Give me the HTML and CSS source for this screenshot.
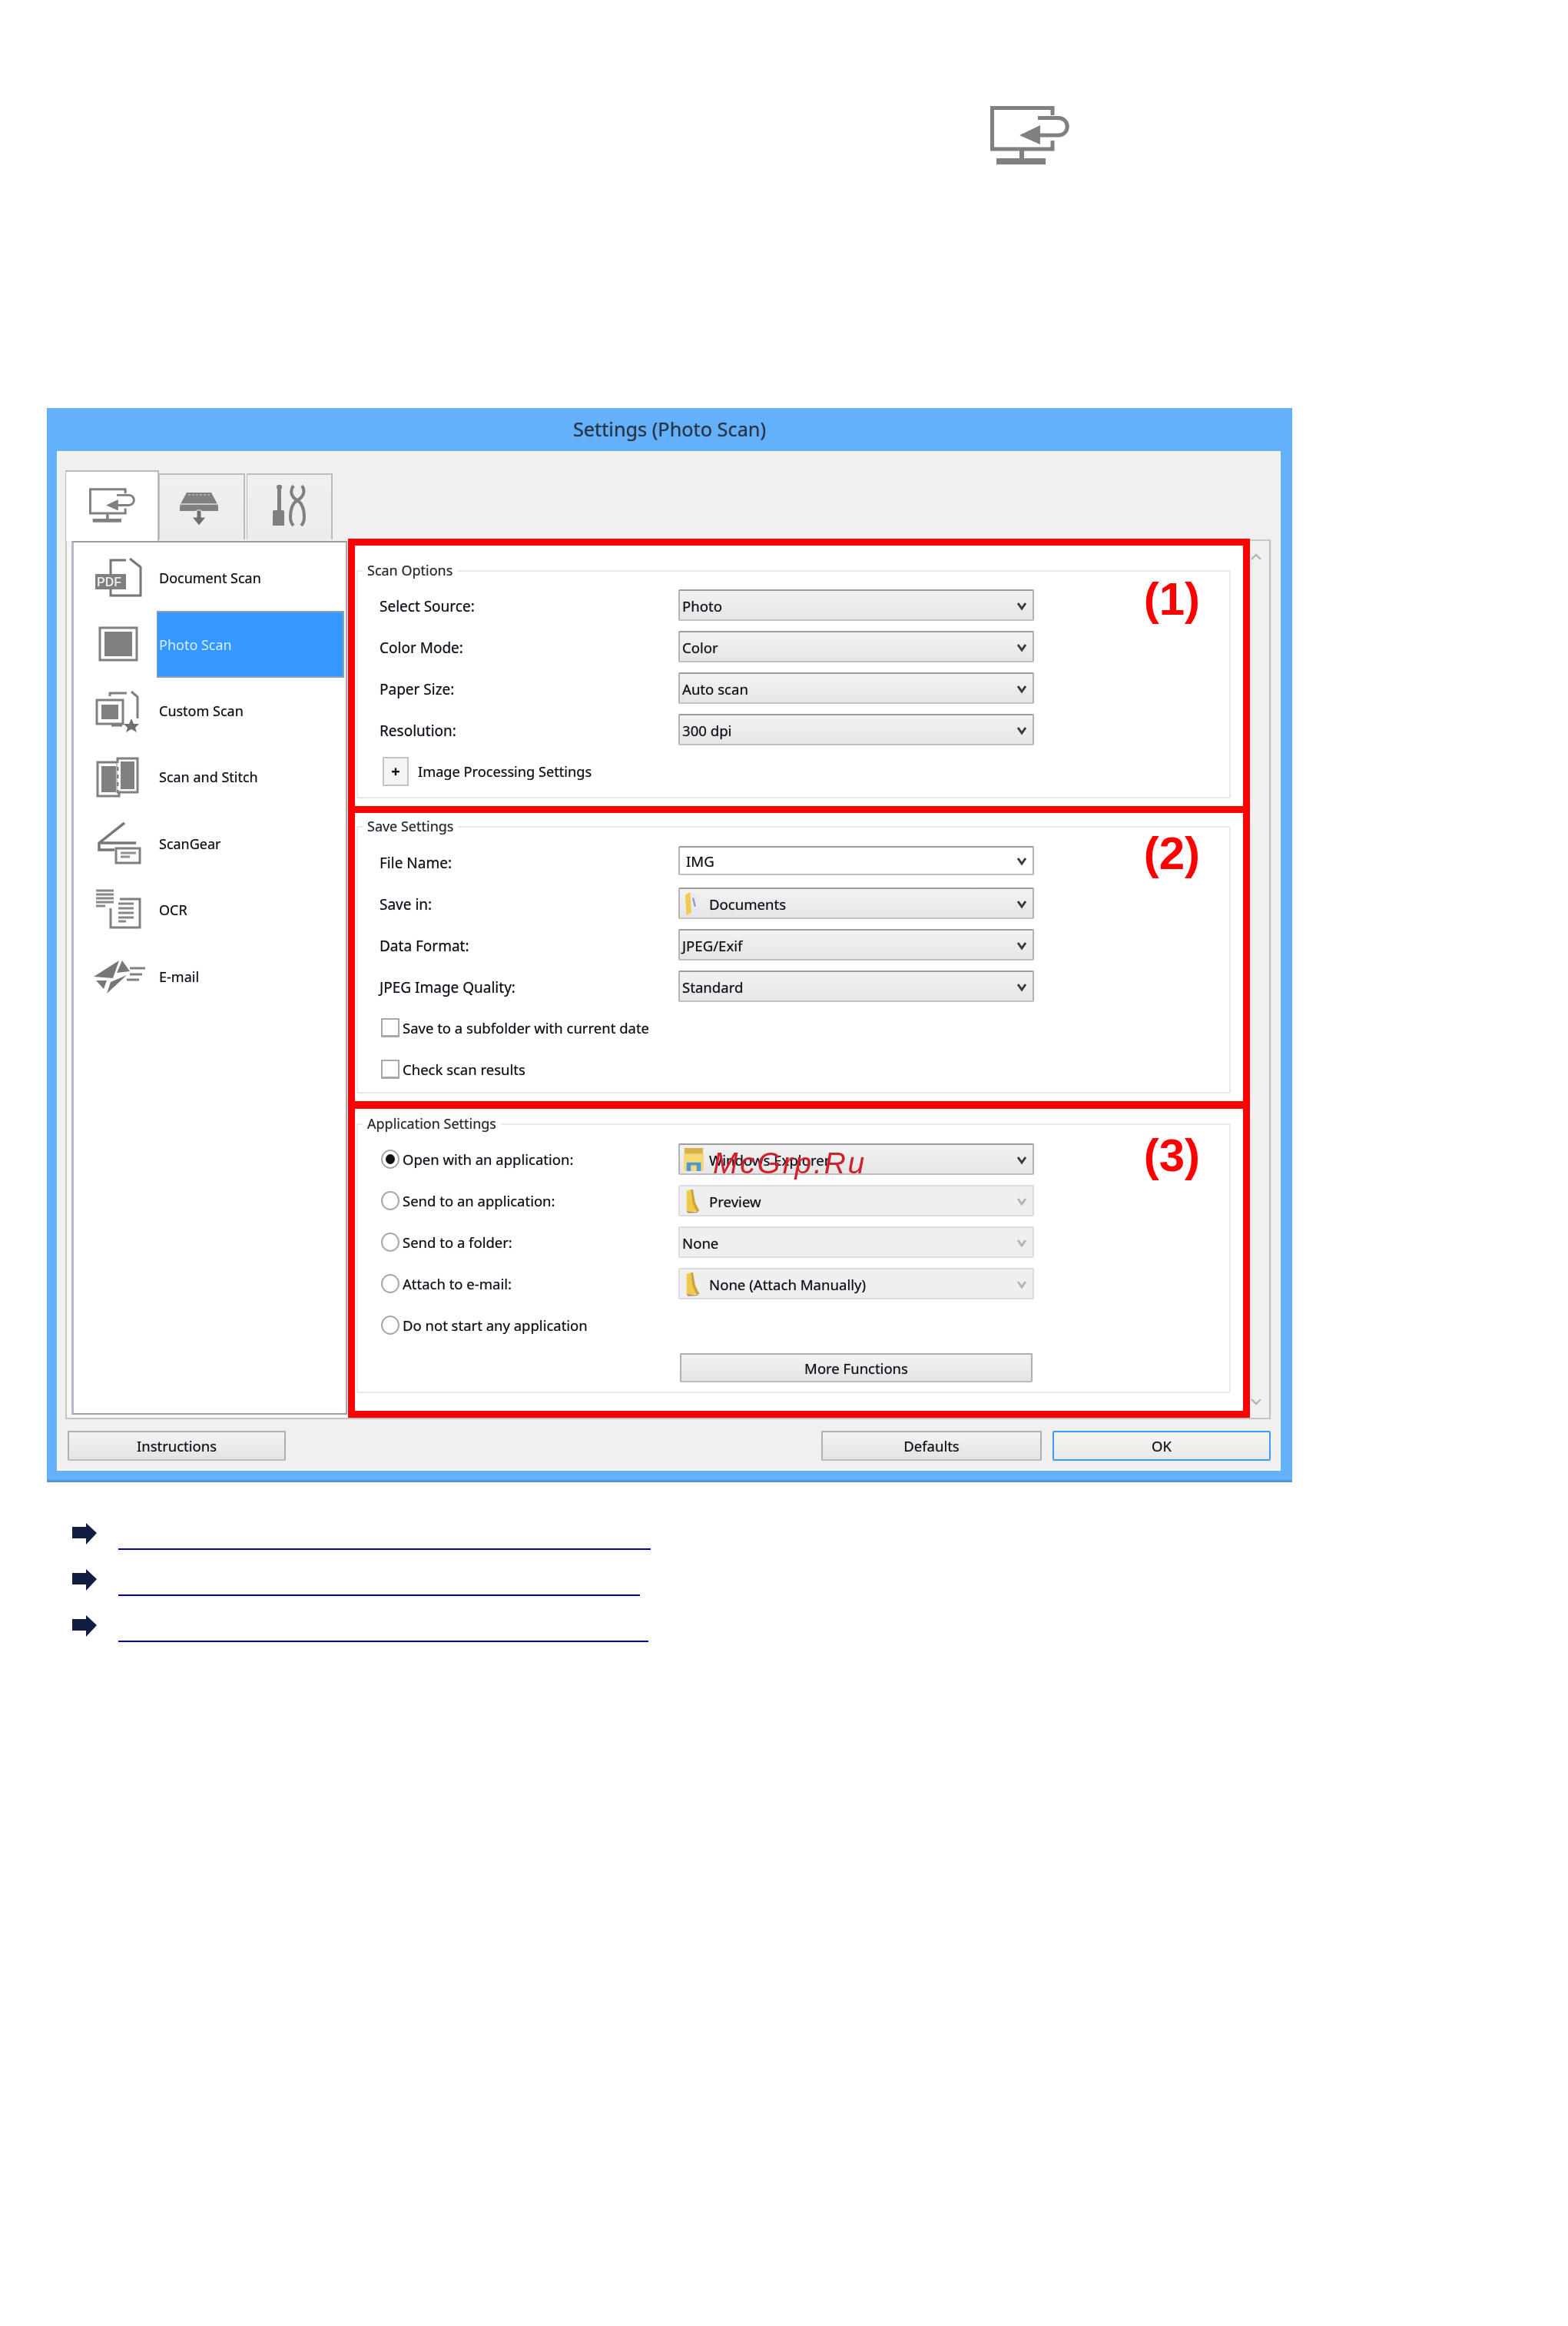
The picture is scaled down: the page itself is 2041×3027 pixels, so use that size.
FILE: index.html
```html
<!DOCTYPE html>
<html lang="en">
<head>
<meta charset="utf-8">
<title>Settings (Photo Scan)</title>
<link rel="stylesheet" href="styles.css">
</head>
<body>
<svg class="defs" width="0" height="0" aria-hidden="true">
  <defs>
    <symbol id="i-monitor" viewBox="0 0 103 76">
      <path d="M81 12V2.5H2.5V56H81V45M62 15.500H89A11.250 11.250 0 0 1 89 38H64" fill="none" stroke="#808080" stroke-width="5"/>
      <path d="M38 38L65 25V50Z M38 58H44V68H38Z M8 68H72V76H8Z" fill="#808080"/>
    </symbol>
    <symbol id="i-slim-folder" viewBox="0 0 30 36">
      <path d="M5 4L11 2L13 20L19 31L13 33L5 32Z" fill="#efc94c"/>
      <path d="M11 2L14 2L17 20L23 32L19 33L13 20Z" fill="#cfa233"/>
      <path d="M5 32L13 33L19 33L22 34L7 35Z" fill="#a89060"/>
    </symbol>
    <symbol id="i-doc-folder" viewBox="0 0 30 36">
      <path d="M3 6L10 2L12 30L5 34Z" fill="#f2c94c"/>
      <path d="M10 2L18 6L24 32L12 34L11 18Z" fill="#e8e8f0"/>
      <path d="M14 10L17 22" stroke="#7a8fb8" stroke-width="2"/>
    </symbol>
    <symbol id="i-chevron" viewBox="0 0 14 12">
      <path d="M2 2L7 9L12 2" fill="none" stroke="currentColor" stroke-width="3"/>
    </symbol>
    <symbol id="i-link-arrow" viewBox="0 0 32 28">
      <path d="M0 5H18V0L32 13L18 28V20H0Z" fill="#121d42"/>
    </symbol>
  </defs>
</svg>

<main class="page">
  <svg class="top-icon"><use href="#i-monitor"/></svg>

  <section class="window">
    <h1 class="titlebar">Settings (Photo Scan)</h1>
    <div class="chrome">
      <div class="tabs">
        <div class="tab tab-active"><svg class="tab-icon-scan"><use href="#i-monitor"/></svg></div>
        <div class="tab">
          <svg class="tab-icon" viewBox="0 0 52 46">
            <path d="M10 3H42L49 16Q51 19 51 22V27H1V22Q1 19 3 16Z" fill="#808080"/>
            <path d="M2 18H50" stroke="#c8c8c8" stroke-width="2"/>
            <path d="M12 6H40" stroke="#a8a8a8" stroke-width="2" stroke-dasharray="3 2"/>
            <path d="M23 26H29V35H35L26 46L17 35H23Z" fill="#707070" stroke="#f0f0f0" stroke-width="1"/>
          </svg>
        </div>
        <div class="tab">
          <svg class="tab-icon-tools" viewBox="0 0 44 54">
            <path d="M6 3H11V33H6Z M0 35Q0 33 2 33H13Q15 33 15 35V53H0Z" fill="#808080"/>
            <circle cx="8.500" cy="3" r="3.500" fill="#808080"/>
            <path d="M27 1C22 8 24 16 32 20C24 25 23 34 23 42C23 47 25 51 27 53M38 1C43 8 40 16 32 20C40 25 41 34 41 42C41 47 39 51 37 53" fill="none" stroke="#808080" stroke-width="4"/>
          </svg>
        </div>
      </div>

      <div class="frame">
        <nav class="list">
          <a class="item">
            <svg class="item-icon" viewBox="0 0 72 56">
              <path d="M25 23V5H45M50 3L64 14V51H25V43" fill="none" stroke="#777" stroke-width="3"/>
              <rect x="5" y="23" width="40" height="20" fill="#808080"/>
              <text class="pdf" x="7" y="39">PDF</text>
            </svg>
            <span class="item-text">Document Scan</span>
          </a>
          <a class="item item-on">
            <svg class="item-icon" viewBox="0 0 72 56">
              <rect x="11" y="7" width="48" height="42" fill="none" stroke="#808080" stroke-width="3"/>
              <rect x="17" y="12" width="36" height="32" fill="#808080"/>
            </svg>
            <span class="item-text">Photo Scan</span>
          </a>
          <a class="item">
            <svg class="item-icon" viewBox="0 0 72 56">
              <path d="M24 9V5H46M52 3L60 10V38M26 47H40" fill="none" stroke="#808080" stroke-width="3"/>
              <rect x="7" y="14" width="34" height="31" fill="#fff" stroke="#808080" stroke-width="3"/>
              <rect x="13" y="20" width="22" height="19" fill="#808080"/>
              <path d="M52 38L55 45L62 45L57 50L59 56L52 52L45 56L47 50L42 45L49 45Z" fill="#707070"/>
            </svg>
            <span class="item-text">Custom Scan</span>
          </a>
          <a class="item">
            <svg class="item-icon" viewBox="0 0 72 56">
              <rect x="8" y="9" width="28" height="44" fill="none" stroke="#808080" stroke-width="3"/>
              <rect x="34" y="4" width="26" height="44" fill="#fff" stroke="#808080" stroke-width="3"/>
              <rect x="13" y="14" width="19" height="34" fill="#808080"/>
              <rect x="38" y="8" width="18" height="36" fill="#808080"/>
              <path d="M35 10V50" stroke="#fff" stroke-width="3" stroke-dasharray="5 5"/>
            </svg>
            <span class="item-text">Scan and Stitch</span>
          </a>
          <a class="item">
            <svg class="item-icon" viewBox="0 0 72 56">
              <path d="M43 1L10 27V36H30M12 27H58" fill="none" stroke="#777" stroke-width="3.500"/>
              <rect x="32" y="34" width="31" height="19" fill="#fff" stroke="#808080" stroke-width="3"/>
              <path d="M38 40H58M38 45H50" stroke="#909090" stroke-width="3"/>
            </svg>
            <span class="item-text">ScanGear</span>
          </a>
          <a class="item">
            <svg class="item-icon" viewBox="0 0 72 56">
              <path d="M6 3H29M6 8H29M6 13H29M6 18H29M6 23H18" stroke="#888" stroke-width="3"/>
              <path d="M25 26V51H63V14H37" fill="none" stroke="#808080" stroke-width="3"/>
              <path d="M35 20H55M35 26H55M35 32H55M35 38H55M35 43H45" stroke="#888" stroke-width="3"/>
            </svg>
            <span class="item-text">OCR</span>
          </a>
          <a class="item">
            <svg class="item-icon" viewBox="0 0 72 56">
              <path d="M3 29L36 8L28 31Z" fill="#777"/>
              <path d="M40 8L50 22L33 24Z" fill="#777"/>
              <path d="M6 34L20 34L16 45Z" fill="#777"/>
              <path d="M25 36L46 27L20 51Z" fill="#777"/>
              <path d="M50 18H70M50 26H66M46 33H62" stroke="#808080" stroke-width="3"/>
            </svg>
            <span class="item-text">E-mail</span>
          </a>
        </nav>

        <div class="marked">
          <section class="mark mark-1">
            <div class="group group-1">
              <span class="legend">Scan Options</span>
              <strong class="mark-no">(1)</strong>
              <div class="rows">
                <span class="label">Select Source:</span>
                <div class="select"><span class="val">Photo</span><svg class="chev"><use href="#i-chevron"/></svg></div>
                <span class="label">Color Mode:</span>
                <div class="select"><span class="val">Color</span><svg class="chev"><use href="#i-chevron"/></svg></div>
                <span class="label">Paper Size:</span>
                <div class="select"><span class="val">Auto scan</span><svg class="chev"><use href="#i-chevron"/></svg></div>
                <span class="label">Resolution:</span>
                <div class="select"><span class="val">300 dpi</span><svg class="chev"><use href="#i-chevron"/></svg></div>
                <div class="expander"><span class="plus">+</span><span class="expander-text">Image Processing Settings</span></div>
              </div>
            </div>
          </section>

          <section class="mark mark-2">
            <div class="group group-2">
              <span class="legend">Save Settings</span>
              <strong class="mark-no">(2)</strong>
              <div class="rows">
                <span class="label">File Name:</span>
                <div class="select select-edit"><span class="val val-edit">IMG</span><svg class="chev"><use href="#i-chevron"/></svg></div>
                <span class="label">Save in:</span>
                <div class="select"><svg class="folder"><use href="#i-doc-folder"/></svg><span class="val val-icon">Documents</span><svg class="chev"><use href="#i-chevron"/></svg></div>
                <span class="label">Data Format:</span>
                <div class="select"><span class="val">JPEG/Exif</span><svg class="chev"><use href="#i-chevron"/></svg></div>
                <span class="label">JPEG Image Quality:</span>
                <div class="select"><span class="val">Standard</span><svg class="chev"><use href="#i-chevron"/></svg></div>
                <label class="opt opt-wide"><span class="check"></span><span class="opt-text">Save to a subfolder with current date</span></label>
                <label class="opt opt-wide"><span class="check"></span><span class="opt-text">Check scan results</span></label>
              </div>
            </div>
          </section>

          <section class="mark mark-3">
            <div class="group group-3">
              <span class="legend">Application Settings</span>
              <strong class="mark-no">(3)</strong>
              <div class="rows">
                <label class="opt"><span class="radio radio-on"></span><span class="opt-text">Open with an application:</span></label>
                <div class="select">
                  <svg class="folder" viewBox="0 0 30 36">
                    <rect x="2" y="2" width="26" height="10" fill="#d9b24a"/>
                    <rect x="1" y="10" width="28" height="24" rx="2" fill="#f7d977"/>
                    <rect x="5" y="22" width="20" height="12" fill="#4a9ad4"/>
                    <rect x="11" y="26" width="8" height="8" fill="#f7d977"/>
                  </svg>
                  <span class="val val-icon">Windows Explorer</span><svg class="chev"><use href="#i-chevron"/></svg>
                  <span class="watermark">McGrp.Ru</span>
                </div>
                <label class="opt"><span class="radio"></span><span class="opt-text">Send to an application:</span></label>
                <div class="select select-off"><svg class="folder"><use href="#i-slim-folder"/></svg><span class="val val-icon">Preview</span><svg class="chev"><use href="#i-chevron"/></svg></div>
                <label class="opt"><span class="radio"></span><span class="opt-text">Send to a folder:</span></label>
                <div class="select select-off"><span class="val">None</span><svg class="chev"><use href="#i-chevron"/></svg></div>
                <label class="opt"><span class="radio"></span><span class="opt-text">Attach to e-mail:</span></label>
                <div class="select select-off"><svg class="folder"><use href="#i-slim-folder"/></svg><span class="val val-icon">None (Attach Manually)</span><svg class="chev"><use href="#i-chevron"/></svg></div>
                <label class="opt opt-wide"><span class="radio"></span><span class="opt-text">Do not start any application</span></label>
                <button class="btn btn-more" type="button">More Functions</button>
              </div>
            </div>
          </section>
        </div>

        <div class="scroll">
          <svg class="scroll-arrow" viewBox="0 0 14 10"><path d="M1 8L7 2L13 8" fill="none" stroke="#b0b0b0" stroke-width="2"/></svg>
          <svg class="scroll-arrow" viewBox="0 0 14 10"><path d="M1 2L7 8L13 2" fill="none" stroke="#b0b0b0" stroke-width="2"/></svg>
        </div>
      </div>

      <footer class="footer">
        <button class="btn btn-foot" type="button">Instructions</button>
        <button class="btn btn-foot btn-defaults" type="button">Defaults</button>
        <button class="btn btn-foot btn-ok" type="button">OK</button>
      </footer>
    </div>
  </section>

  <ul class="links">
    <li class="link-row"><svg class="link-arrow"><use href="#i-link-arrow"/></svg><a class="link link-a"></a></li>
    <li class="link-row"><svg class="link-arrow"><use href="#i-link-arrow"/></svg><a class="link link-b"></a></li>
    <li class="link-row"><svg class="link-arrow"><use href="#i-link-arrow"/></svg><a class="link link-c"></a></li>
  </ul>
</main>
</body>
</html>
```
FILE: styles.css
```css
* { box-sizing: border-box; }
html, body { margin: 0; background: #fff; }
body { font-family: "Noto Sans", "Open Sans", sans-serif; font-size: 18px; color: #0c0c14; }
.defs { position: absolute; }

.page { width: 2041px; height: 3027px; padding-top: 138px; overflow: hidden; }

.top-icon { display: block; width: 103px; height: 76px; margin-left: 1289px; filter: blur(.6px); }

.window {
  display: flex; flex-direction: column;
  width: 1621px; height: 1398px;
  margin: 317px 0 0 61px;
  background: #63b1fb;
  box-shadow: inset 0 -3px 0 #5596cf;
  text-shadow: 0 0 1px rgba(20, 20, 50, .55);
  filter: blur(.6px);
}
.titlebar {
  height: 56px; margin: 0; padding-bottom: 3px;
  display: flex; align-items: center; justify-content: center;
  font-size: 25.300px; font-weight: 400; color: #2a3340;
}
.chrome {
  flex: 1;
  margin: 0 15px 15px 13px;
  padding: 25px 13px 13px 11px;
  background: #f0f0f0;
  box-shadow: inset 0 0 0 2px #f6f6ee;
  display: flex; flex-direction: column;
}

/* tabs */
.tabs { display: flex; align-items: flex-start; height: 92px; }
.tab {
  width: 112px; height: 86px; margin-top: 4px;
  display: flex; align-items: center; justify-content: center;
  background: linear-gradient(#f0f0f0, #ececec);
  border: 2px solid #bcbcbc; border-bottom: 0;
  border-left-width: 1px;
}
.tab + .tab { padding-right: 8px; }
.tab + .tab + .tab { margin-left: 2px; padding-right: 0; }
.tab-active { width: 122px; height: 92px; margin-top: 0; background: #fff; padding-bottom: 4px; }
.tab-icon-scan { width: 60px; height: 45px; }
.tab-icon { width: 52px; height: 46px; margin-top: 2px; }
.tab-icon-tools { width: 44px; height: 54px; margin-top: -4px; }

/* panel */
.frame {
  display: flex; align-items: flex-start;
  height: 1143px;
  padding-left: 6px;
  background: #f8f8f8;
  border-left: 2px solid #c8c8c8;
  border-bottom: 2px solid #c4c4c4;
}
.list {
  flex: none;
  width: 359px; height: 1137px;
  padding: 3px 2px 0 0;
  background: #fff;
  border-top: 2px solid #9a9a9a;
  border-left: 3px solid #b8b8c6;
  border-right: 2px solid #a8a8a8;
  border-bottom: 2px solid #a0a0a8;
}
.item { display: flex; align-items: stretch; height: 86.400px; }
.item-icon { flex: none; width: 72px; height: 56px; margin: 15px 13px 0 23px; }
.item-text { flex: 1; display: flex; align-items: center; padding-left: 3px; }
.item-on .item-text { background: #3399ff; color: #d8ecff; text-shadow: none; border: solid #8a9fb4; border-width: 2px 2px 2px 1px; padding-left: 2px; }
.pdf { font-family: "Liberation Sans", sans-serif; font-size: 16px; font-weight: 700; fill: #ececec; }

/* red marked sections */
.marked { width: 1174px; margin: -3px 0 0 1px; flex: none; }
.mark { border: solid #ff0000; border-width: 0 9px 9px; background: #fff; }
.mark-1 { border-top-width: 9px; padding-top: 32px; padding-bottom: 10px; }
.mark-2 { padding-top: 17px; padding-bottom: 10px; border-bottom-width: 10px; }
.mark-3 { padding-top: 19px; padding-bottom: 23px; }

.group {
  position: relative;
  margin: 0 16px 0 2px;
  padding-left: 28px;
  border: 2px solid #e9e9e9;
  border-radius: 2px;
}
.group-1 { height: 297px; }
.group-2 { height: 348px; }
.group-3 { height: 351px; }
.legend {
  display: table;
  margin: -15px 0 0 -22px;
  padding: 0 6px;
  line-height: 26px;
  background: #fff;
  color: #2a2a30;
}
.mark-no {
  position: absolute; right: 38px; top: 4px;
  font: 700 60px/64px "Liberation Sans", Arial, sans-serif;
  text-shadow: none;
  color: #ff0000;
}
.group-2 .mark-no { top: 2px; right: 38px; }
.group-3 .mark-no { top: 8px; right: 38px; }

.rows {
  display: grid;
  grid-template-columns: 389px 463px;
  grid-auto-rows: 41px;
  row-gap: 13px;
  margin-top: 12px;
  align-items: center;
}
.group-2 .rows, .group-3 .rows { margin-top: 13px; }
.label { padding-top: 3px; font-size: 19px; white-space: nowrap; }

.select {
  position: relative;
  display: flex; align-items: center;
  height: 41px;
  padding-left: 3px;
  background: linear-gradient(#f2f2f2, #e6e6e6);
  border: 2px solid #b4b4b4; border-top-color: #9c9c9c; border-bottom-color: #c0c0c0;
  border-radius: 2px;
}
.select-edit { height: 38px; align-self: start; background: #fff; }
.val { padding-top: 2px; font-size: 18.600px; white-space: nowrap; }
.val-edit { padding-left: 5px; padding-top: 0; }
.val-icon { margin-left: 6px; }
.folder { flex: none; width: 28px; height: 34px; margin-left: 1px; }
.chev { width: 14px; height: 12px; margin: 2px 7px 0 auto; color: #3a3a3a; }
.select-off { background: #efefef; border-color: #dcdcdc; }
.select-off .chev { color: #b4b4b4; }
.watermark {
  position: absolute; left: 43px; top: 2.500px;
  font: italic 400 39px/42px "Liberation Sans", Arial, sans-serif;
  letter-spacing: 2.800px;
  text-shadow: none;
  color: #d0202a;
  white-space: nowrap;
}

.expander { grid-column: 1 / -1; display: flex; align-items: center; padding-left: 4px; }
.plus {
  width: 34px; height: 38px; margin-right: 12px;
  display: flex; align-items: center; justify-content: center;
  background: #f4f4f4; border: 2px solid #c4c4c4;
  font-weight: 700; font-size: 20px; line-height: 1;
}
.expander-text { font-size: 18.200px; }

.opt { display: flex; align-items: center; padding-left: 2px; font-size: 18.500px; white-space: nowrap; }
.opt-wide { grid-column: 1 / -1; }
.opt-text { margin-left: 4px; }
.check { flex: none; width: 24px; height: 25px; background: #fff; border: 2px solid #a8a8a8; border-bottom-width: 3px; }
.radio { flex: none; position: relative; width: 24px; height: 25px; background: #fff; border: 2px solid #a8a8a8; border-radius: 50%; }
.radio-on::after { content: ""; position: absolute; inset: 4px; border-radius: 50%; background: #111; }

.btn {
  display: flex; align-items: center; justify-content: center;
  font: inherit; font-size: 18.500px; color: #0c0c14;
  text-shadow: inherit;
  background: linear-gradient(#f2f2f2, #e4e4e4);
  border: 2px solid #b0b0b0; border-bottom-color: #bcbcbc;
  border-radius: 2px;
  padding: 0;
}
.btn-more { grid-column: 2; width: 459px; height: 38px; margin: 3px 0 0 2px; }
.btn-foot { width: 284px; height: 39px; }

.scroll {
  flex: 1; align-self: stretch;
  display: flex; flex-direction: column; justify-content: space-between;
  margin-top: -2px; padding: 16px 0 16px 0;
  background: #f0f0f0;
  border-top: 2px solid #c8c8c8;
  border-right: 2px solid #c0c0c0;
}
.scroll-arrow { display: block; width: 14px; height: 10px; margin-left: 1px; }

.footer { display: flex; gap: 14px; margin-top: 15px; padding-left: 3px; }
.btn-defaults { margin-left: auto; width: 287px; }
.btn-ok { border-color: #3f9bf0; background: linear-gradient(#f6f6f0, #e8e8e8); }

/* links */
.links { list-style: none; margin: 53px 0 0 94px; padding: 0; }
.link-row { display: flex; align-items: flex-start; height: 60px; }
.link-arrow { flex: none; width: 32px; height: 28px; margin-right: 28px; filter: blur(.4px); }
.link { display: block; height: 35px; border-bottom: 2px solid #0000c4; }
.link-a { width: 693px; }
.link-b { width: 679px; }
.link-c { width: 690px; }
```
